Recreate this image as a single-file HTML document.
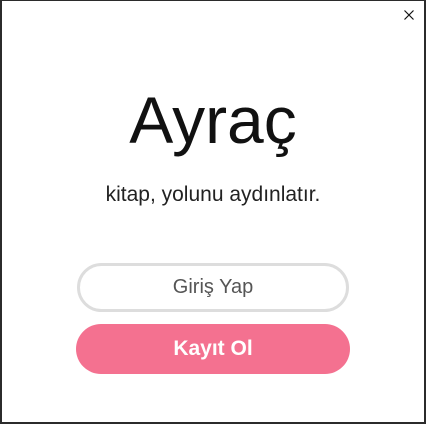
<!DOCTYPE html>
<html><head><style>
html,body{margin:0;padding:0;width:426px;height:425px;overflow:hidden;background:#fff;font-family:"Liberation Sans",sans-serif}
.frame{position:absolute;left:0;top:0;width:422px;height:421px;border:2px solid #2b2b2b;border-top-width:1px;background:#fff}
.t{position:absolute;left:0;width:426px;text-align:center;white-space:nowrap}
.btn{position:absolute;box-sizing:border-box;border-radius:26px;text-align:center}
</style></head><body>
<div class="frame"></div>
<svg style="position:absolute;left:403px;top:9px" width="12" height="12"><path d="M1.5 1.5L10.5 10.5M10.5 1.5L1.5 10.5" stroke="#111" stroke-width="1.2"/></svg>
<div class="t" style="top:80px;font-size:66px;line-height:80px;color:#111;font-weight:300">Ayraç</div>
<div class="t" style="top:182px;font-size:21px;line-height:26px;color:#222">kitap, yolunu aydınlatır.</div>
<div class="btn" style="left:77px;top:263px;width:272px;height:49px;border:3px solid #ddd;color:#555;font-size:20px;line-height:43px">Giriş Yap</div>
<div class="btn" style="left:76px;top:324px;width:274px;height:50px;background:#f47190;color:#fff;font-size:21px;font-weight:bold;line-height:50px">Kayıt Ol</div>
</body></html>
